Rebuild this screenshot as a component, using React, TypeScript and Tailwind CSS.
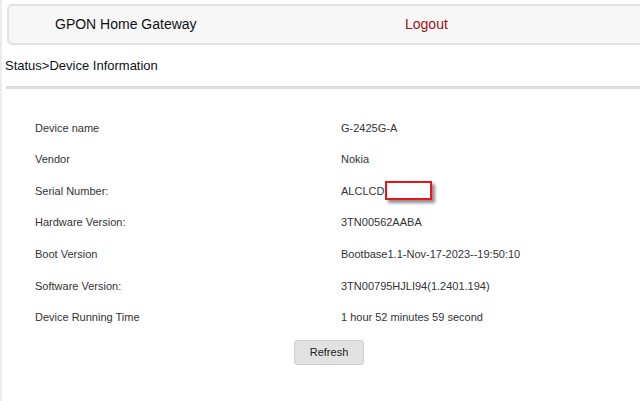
import React from "react";

const rows: [string, React.ReactNode][] = [
  ["Device name", "G-2425G-A"],
  ["Vendor", "Nokia"],
  [
    "Serial Number:",
    <span className="flex items-center">
      ALCLCD
      <span className="ml-[1px] inline-block h-[19px] w-[47px] border-2 border-[#e8141b] bg-white shadow-[3px_3px_3px_rgba(0,0,0,0.45)]" />
    </span>,
  ],
  ["Hardware Version:", "3TN00562AABA"],
  ["Boot Version", "Bootbase1.1-Nov-17-2023--19:50:10"],
  ["Software Version:", "3TN00795HJLI94(1.2401.194)"],
  ["Device Running Time", "1 hour 52 minutes 59 second"],
];

export default function App() {
  return (
    <div
      className="h-[401px] w-[640px] overflow-hidden border-l-2 border-[#ececec] bg-white text-[#333]"
      style={{ fontFamily: '"Liberation Sans", Arial, sans-serif' }}
    >
      <div className="ml-[5px] mt-[4px] flex h-[41px] w-[660px] items-center rounded-[5px] border-2 border-[#e2e2e2] bg-[#f7f7f7] text-[14px]">
        <span className="w-[396px] pl-[46px] text-[#111]">GPON Home Gateway</span>
        <span className="text-[#a50e0e]">Logout</span>
      </div>
      <div className="mt-[13px] pl-[3px] text-[13px] leading-[15px] text-[#111]">
        Status&gt;Device Information
      </div>
      <div className="ml-[4px] mt-[13px] h-[3px] bg-[#dcdcdc]" />
      <div className="mt-[23px] flex flex-col text-[11px]">
        {rows.map(([label, value], i) => (
          <div key={i} className="flex h-[31.6px] items-center">
            <span className="w-[339px] pl-[33px]">{label}</span>
            <span>{value}</span>
          </div>
        ))}
      </div>
      <div className="mt-[7px] flex pl-[292px]">
        <button className="h-[25px] w-[70px] rounded-[3px] border border-[#cfcfcf] bg-[#e1e1e1] text-[11px] text-[#222]">
          Refresh
        </button>
      </div>
    </div>
  );
}
